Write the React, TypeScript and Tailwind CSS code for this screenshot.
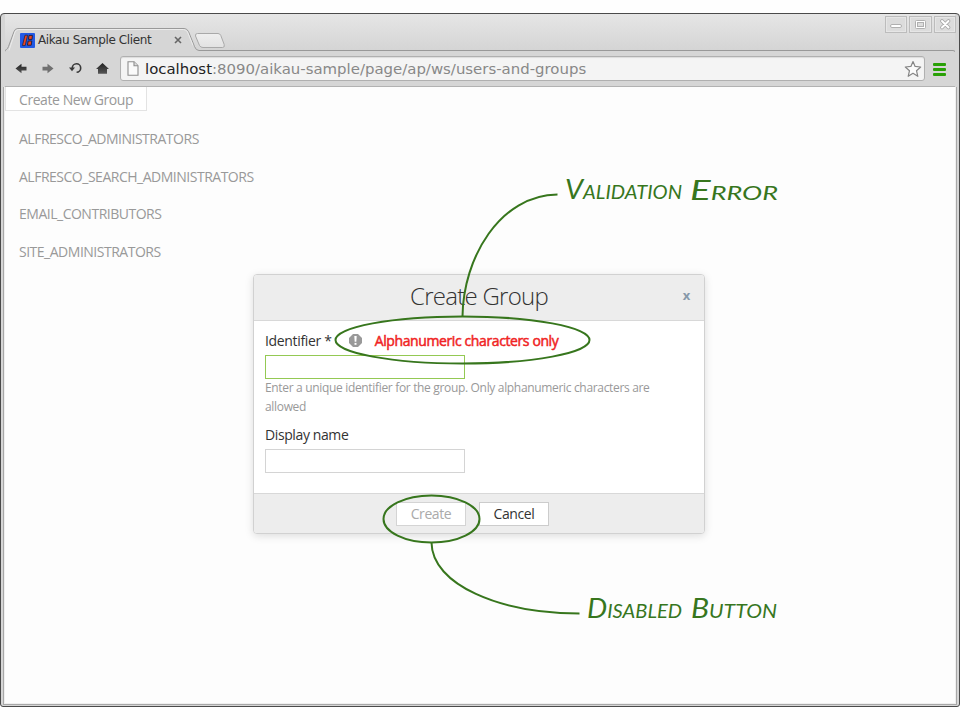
const GREEN = "#37761d";

const groups = [
  "ALFRESCO_ADMINISTRATORS",
  "ALFRESCO_SEARCH_ADMINISTRATORS",
  "EMAIL_CONTRIBUTORS",
  "SITE_ADMINISTRATORS",
];

function Favicon() {
  return (
    <svg width="15" height="15" viewBox="0 0 15 15" className="block">
      <rect width="15" height="15" rx="1" fill="#2159e6" />
      <path d="M5 2.200 L7.600 2.200 L5.200 12.600 L2.400 12.600 Z" fill="#f0441c" stroke="#202448" strokeWidth="0.800" />
      <path d="M9 2.400 H12.400 L12 6.400 H8.400 Z M8.200 8 H11.800 L11.200 12.200 H7.400 Z" fill="#f0441c" stroke="#202448" strokeWidth="1" />
    </svg>
  );
}

function TabShape() {
  return (
    <svg width="950" height="38" viewBox="5 14 950 38" className="absolute top-0 left-0">
      <defs>
        <linearGradient id="newtab" x1="0" y1="0" x2="0" y2="1">
          <stop offset="0" stopColor="#efefef" />
          <stop offset="1" stopColor="#e2e2e2" />
        </linearGradient>
      </defs>
      <path
        d="M4.500 53 V52 Q4.500 50.500 6.500 49.500 Q7.800 48.500 8.500 46.500 L14 31.500 Q15 28.500 18 28.500 H184 Q187 28.500 188.500 31.500 L194.500 46.500 Q196 50.500 199 50.500 H953 Q955.500 50.500 955.500 53"
        fill="#d6d6d6"
        stroke="#999"
        strokeWidth="1"
      />
      <path
        d="M9 50.500 L15 32 Q16 29.500 18.500 29.500 H183.500 Q186 29.500 187.500 32 L193 45.500"
        fill="none"
        stroke="#ececec"
        strokeWidth="1"
      />
      <path
        d="M197.500 33.500 H218 Q220 33.500 220.800 35.500 L224.200 44.500 Q225 47.500 222.500 47.500 H203 Q200.500 47.500 199.500 45.500 L195.500 36 Q195 33.500 197.500 33.500 Z"
        fill="url(#newtab)"
        stroke="#a9a9a9"
      />
    </svg>
  );
}

function WindowButton({ kind, width }: { kind: "min" | "max" | "close"; width: number }) {
  return (
    <svg width={width} height="17" viewBox={`0 0 ${width} 17`} className="block">
      <rect x="0.500" y="0.500" width={width - 1} height="16" fill="#dcdcdc" stroke="#bcbcbc" />
      <rect x="1.500" y="1.500" width={width - 3} height="14" fill="none" stroke="#e6e6e6" />
      {kind === "min" && <rect x="5.500" y="8.500" width="11" height="3" rx="1.500" fill="#fff" stroke="#b0b0b0" />}
      {kind === "max" && (
        <g stroke="#b0b0b0">
          <rect x="6.500" y="4.500" width="10" height="8" rx="1" fill="#fff" />
          <rect x="8.500" y="6.500" width="6" height="4" fill="#ddd" />
        </g>
      )}
      {kind === "close" && (
        <g strokeLinecap="round">
          <path d="M8 5 L14.500 11.500 M14.500 5 L8 11.500" stroke="#a8a8a8" strokeWidth="3.800" />
          <path d="M8 5 L14.500 11.500 M14.500 5 L8 11.500" stroke="#fff" strokeWidth="2" />
        </g>
      )}
    </svg>
  );
}

function NavIcons() {
  return (
    <svg width="110" height="24" viewBox="5 57 110 24" className="block shrink-0">
      <defs>
        <linearGradient id="dark" x1="0" y1="0" x2="0" y2="1">
          <stop offset="0" stopColor="#222" />
          <stop offset="1" stopColor="#555" />
        </linearGradient>
      </defs>
      <path d="M15.500 68.500 L21.500 63.800 V66.800 H26.500 V70.500 H21.500 V73.200 Z" fill="url(#dark)" />
      <path d="M53.500 68.500 L47.500 63.800 V66.800 H42.500 V70.500 H47.500 V73.200 Z" fill="#707070" />
      <path d="M72.300 68 A4.200 4.200 0 1 1 76.600 72.200" fill="none" stroke="#3a3a3a" strokeWidth="1.600" />
      <path d="M69 67.400 H75 L72 71.200 Z" fill="#3a3a3a" />
      <path d="M102.500 63 L109 69 H107 V73.700 H98 V69 H96 Z" fill="url(#dark)" />
    </svg>
  );
}

function PageIcon() {
  return (
    <svg width="12" height="15" viewBox="0 0 12 15" className="block">
      <path d="M1 0.700 H7 L11 4.700 V14.300 H1 Z" fill="#fafafa" stroke="#8e8e8e" strokeWidth="1.100" />
      <path d="M7 0.700 V4.700 H11" fill="#ddd" stroke="#8e8e8e" strokeWidth="1.100" />
    </svg>
  );
}

function Star() {
  return (
    <svg width="18" height="18" viewBox="0 0 18 18" className="block">
      <path
        d="M9 1.500 L11.100 6.400 L16.700 7 L12.500 10.700 L13.800 16.300 L9 13.300 L4.200 16.300 L5.500 10.700 L1.300 7 L6.900 6.400 Z"
        fill="#fbfbfb"
        stroke="#858585"
        strokeWidth="1.200"
        strokeLinejoin="round"
      />
    </svg>
  );
}

function Alert() {
  return (
    <svg width="13" height="13" viewBox="0 0 13 13" className="block">
      <path d="M4 0 H9 L13 4 V9 L9 13 H4 L0 9 V4 Z" fill="#999" />
      <path d="M5.300 2 H7.700 L7.300 7.800 H5.700 Z" fill="#fff" />
      <rect x="5.500" y="8.900" width="2" height="1.900" fill="#fff" />
    </svg>
  );
}

interface WordProps {
  text: string;
  x: number;
  y: number;
  width: number;
}

// One hand-lettered word, squeezed or stretched to its width on the page.
function Word({ text, x, y, width }: WordProps) {
  return (
    <text
      x={x}
      y={y}
      fill={GREEN}
      fontSize="27"
      textLength={width}
      lengthAdjust="spacingAndGlyphs"
      className="font-['Rock_Salt',Lato,sans-serif] font-normal italic [font-variant-caps:small-caps]"
    >
      {text}
    </text>
  );
}

function Annotations() {
  return (
    <svg width="960" height="720" viewBox="0 0 960 720" className="pointer-events-none absolute top-0 left-0">
      <g fill="none" stroke={GREEN} strokeWidth="2">
        <ellipse cx="462.500" cy="340" rx="127" ry="23.500" />
        <path d="M462.500 316.500 C463 258 500 195 557.500 194.500" />
        <ellipse cx="431.500" cy="519" rx="48" ry="23.500" />
        <path d="M431.500 542.500 C432 585 500 613.500 579.500 613.500" />
      </g>
      <Word text="Validation" x={565} y={199} width={117} />
      <Word text="Error" x={690} y={200} width={88} />
      <Word text="Disabled" x={587} y={618} width={95} />
      <Word text="Button" x={691} y={618} width={86} />
    </svg>
  );
}

function CreateGroupDialog() {
  return (
    <div className="absolute top-[274px] left-[253px] flex h-[260px] w-[452px] flex-col overflow-hidden rounded-[4px] border border-[#d1d1d1] bg-white text-[14px] tracking-[-0.390px] text-[#333] shadow-[0_2px_8px_rgba(0,0,0,0.13)]">
      <div className="relative flex h-[46px] shrink-0 justify-center border-b border-[#d8d8d8] bg-[#ededed]">
        <h1 className="text-[24px] leading-[42px] font-light tracking-[-0.740px]">Create Group</h1>
        <span className="absolute top-[9px] right-[14px] text-[13px] leading-[22px] font-bold text-[#8799aa]">x</span>
      </div>
      <div className="flex grow flex-col items-start px-[11px] pt-[10px]">
        <div className="flex h-[20px] items-center">
          <label className="leading-[20px] tracking-[-0.330px]">Identifier *</label>
          <span className="mb-[2px] ml-[17px]"><Alert /></span>
          <span className="ml-[13px] leading-[20px] text-[#f02424] [-webkit-text-stroke:0.500px_#f02424]">
            Alphanumeric characters only
          </span>
        </div>
        <input className="mt-[4px] h-[24px] w-[200px] border border-[#94c953] bg-white outline-none" />
        <p className="mt-[-1px] h-[38px] w-[410px] text-[12px] leading-[19px] tracking-[-0.330px] text-[#999]">
          Enter a unique identifier for the group. Only alphanumeric characters are allowed
        </p>
        <label className="mt-[9px] leading-[20px]">Display name</label>
        <input className="mt-[4px] h-[24px] w-[200px] border border-[#d4d4d4] bg-white outline-none" />
      </div>
      <div className="flex h-[40px] shrink-0 justify-center gap-[13px] border-t border-[#d8d8d8] bg-[#ededed] pt-[8px] pr-[13px]">
        <button disabled className="h-[24px] w-[70px] border border-[#d4d4d4] bg-white leading-[22px] text-[#aaa]">Create</button>
        <button className="h-[24px] w-[70px] border border-[#ccc] bg-white leading-[22px] text-[#333]">Cancel</button>
      </div>
    </div>
  );
}

export default function App() {
  return (
    <div className="relative h-[720px] w-[960px] overflow-hidden bg-[#fefefe] pt-[13px] font-['Open_Sans',sans-serif]">
      <div className="flex h-[694px] w-[960px] flex-col rounded-t-[4px] rounded-b-[3px] border border-[#4a4a4a] bg-[#d6d6d6]">
        <div className="relative mx-[4px] h-[37px] shrink-0 bg-linear-to-b from-[#e6e6e6] to-[#d4d4d4]">
          <TabShape />
          <div className="relative flex h-full items-start">
            <div className="mt-[19px] ml-[15px] flex items-center font-['DejaVu_Sans',sans-serif] text-[12px] leading-[15px] tracking-[-0.390px] text-[#333]">
              <Favicon />
              <span className="ml-[3px] w-[136px]">Aikau Sample Client</span>
              <svg width="8" height="8" viewBox="0 0 8 8" className="mb-[1px]">
                <path d="M1 1 L7 7 M7 1 L1 7" stroke="#666" strokeWidth="1.600" />
              </svg>
            </div>
            <div className="mt-[2px] mr-[-1px] ml-auto flex gap-[2px]">
              <WindowButton kind="min" width={22} />
              <WindowButton kind="max" width={23} />
              <WindowButton kind="close" width={22} />
            </div>
          </div>
        </div>
        <div className="relative mx-[4px] flex h-[36px] shrink-0 items-center border-b border-[#b2b2b2]">
          <NavIcons />
          <div className="ml-[5px] flex h-[25px] w-[805px] items-center rounded-[3px] border border-[#b0b0b0] bg-[#f4f4f4] pr-[2px] pl-[6px] shadow-[inset_0_1px_1px_rgba(0,0,0,0.100)]">
            <PageIcon />
            <span className="ml-[6px] font-['DejaVu_Sans',sans-serif] text-[14.930px] leading-[22px] whitespace-nowrap text-[#888]">
              <span className="text-[#222]">localhost</span>:8090/aikau-sample/page/ap/ws/users-and-groups
            </span>
            <span className="ml-auto"><Star /></span>
          </div>
          <div className="mt-[1px] ml-[8px] flex w-[13px] flex-col gap-[2px]">
            <span className="h-[3px] rounded-[1px] bg-[#29a006]" />
            <span className="h-[3px] rounded-[1px] bg-[#29a006]" />
            <span className="h-[3px] rounded-[1px] bg-[#29a006]" />
          </div>
        </div>
        <div className="mx-[4px] mb-[3px] grow bg-[#fdfdfd] text-[14px] text-[#999] shadow-[0_0_0_1px_#efefef,0_0_0_2px_#a8a8a8] [clip-path:inset(0_-3px_-3px_-3px)]">
          <div className="h-[24px] w-[142px] border border-t-0 border-[#e3e3e3] bg-white pl-[13px] leading-[25px] tracking-[-0.430px]">Create New Group</div>
          <ul className="mt-[9px] pl-[14px] tracking-[-0.490px]">
            {groups.map((name) => (
              <li key={name} className="h-[37.600px] leading-[38px]">{name}</li>
            ))}
          </ul>
        </div>
      </div>
      <CreateGroupDialog />
      <Annotations />
    </div>
  );
}
